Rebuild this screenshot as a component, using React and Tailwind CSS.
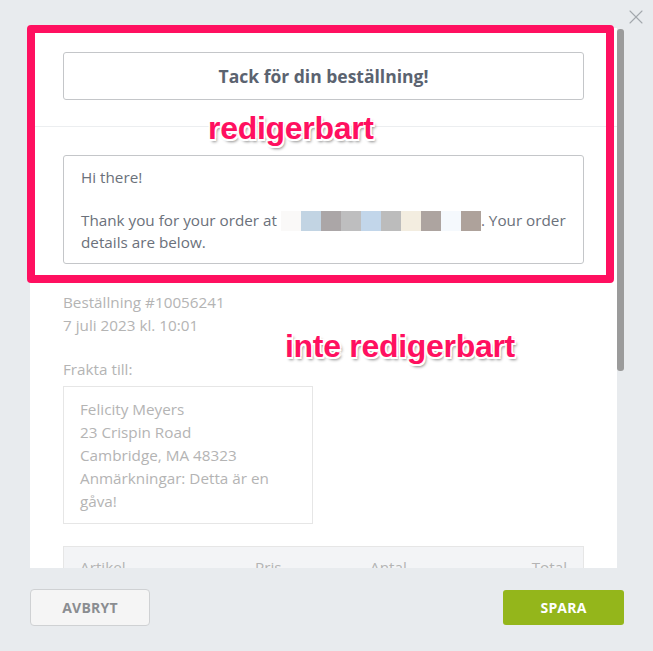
import { X } from "lucide-react";

const pixels = ["#faf9f8", "#c2d4e3", "#aba6a7", "#bebebf", "#c2d6ea", "#bcbcbc", "#f3ede0", "#ada4a0", "#f5f9fd", "#aea29b"];

const Redacted = () => (
  <span className="inline-flex h-[20px] align-[-5px]">
    {pixels.map((c, i) => (
      <span key={i} className="w-[20px] h-[20px]" style={{ backgroundColor: c }} />
    ))}
  </span>
);

const Label = ({ children, className }) => (
  <div
    className={
      "absolute font-['Liberation_Sans',Arial,sans-serif] font-bold text-[32px] leading-none text-[#ff1060] tracking-[-0.3px] [text-shadow:-1.5px_-1.5px_0_#fff,1.5px_-1.5px_0_#fff,-1.5px_1.5px_0_#fff,1.5px_1.5px_0_#fff,2px_3px_3px_rgba(0,0,0,0.45)] " +
      className
    }
  >
    {children}
  </div>
);

export default function App() {
  return (
    <div className="relative w-[653px] h-[651px] bg-[#e8ebee] font-['Open_Sans',sans-serif] overflow-hidden">
      <button className="absolute left-[624px] top-[5px] text-[#a3a8ad]">
        <X size={24} strokeWidth={1.1} />
      </button>

      <div className="pl-[30px] pt-[28px]">
        <div className="relative w-[594px] h-[540px] overflow-hidden">
          <div className="w-[587px] h-full bg-white">
            <div className="px-[33px] pt-[24px]">
              <div className="h-[48px] border border-[#c4c6c9] rounded-[3px] flex items-center justify-center text-[17.5px] font-bold text-[#5b6370]">
                Tack för din beställning!
              </div>
            </div>
            <div className="mt-[26px] border-t border-[#eceef0]" />
            <div className="px-[33px] pt-[28px]">
              <div className="border border-[#c4c6c9] rounded-[3px] pl-[17px] pr-[14px] pt-[10px] pb-[10px] text-[15.25px] leading-[22px] text-[#6b717b]">
                <div>Hi there!</div>
                <div className="h-[21px]" />
                <div>
                  Thank you for your order at <Redacted />. Your order details are below.
                </div>
              </div>

              <div className="mt-[27px] text-[15.25px] leading-[23px] text-[#b4b4b4]">
                <div>Beställning #10056241</div>
                <div>7 juli 2023 kl. 10:01</div>
                <div className="mt-[21px]">Frakta till:</div>
              </div>

              <div className="mt-[5px] w-[250px] border border-[#e6e6e6] pl-[16px] pr-[10px] pt-[11px] pb-[10px] text-[15.25px] leading-[23px] text-[#b4b4b4]">
                <div>Felicity Meyers</div>
                <div>23 Crispin Road</div>
                <div>Cambridge, MA 48323</div>
                <div>Anmärkningar: Detta är en gåva!</div>
              </div>

              <div className="mt-[22px] h-[60px] border border-[#e6e6e6] bg-[#f3f4f6] grid grid-cols-[175px_115px_1fr_auto] pl-[16px] pr-[16px] pt-[9px] text-[15.25px] leading-[23px] text-[#b4b4b4]">
                <div>Artikel</div>
                <div>Pris</div>
                <div>Antal</div>
                <div>Total</div>
              </div>
            </div>
          </div>
          <div className="absolute right-0 top-[1px] w-[7px] h-[342px] rounded-[3px] bg-[#9b9b9b]" />
        </div>
      </div>

      <div className="flex justify-between items-center pl-[30px] pr-[29px] mt-[21px]">
        <button className="w-[120px] h-[37px] rounded-[4px] border border-[#cfd1d3] bg-[#f5f5f5] text-[14px] font-bold text-[#8a8d91] tracking-[0.2px]">
          AVBRYT
        </button>
        <button className="w-[121px] h-[35px] rounded-[3px] bg-[#94b61b] text-[14px] font-bold text-white tracking-[0.2px]">
          SPARA
        </button>
      </div>

      <div className="absolute left-[27px] top-[25px] w-[587px] h-[258px] border-[8px] border-[#ff1060] rounded-[4px] pointer-events-none" />

      <Label className="left-[208px] top-[112px]">redigerbart</Label>
      <Label className="left-[285px] top-[330px]">inte redigerbart</Label>
    </div>
  );
}
